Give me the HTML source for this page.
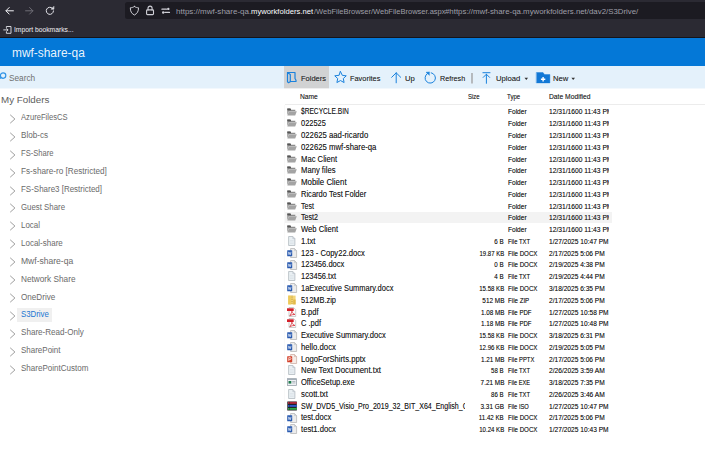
<!DOCTYPE html>
<html lang="en"><head><meta charset="utf-8"><title>mwf-share-qa</title>
<style>
html,body{margin:0;padding:0;background:#fff}
body{width:705px;height:462px;position:relative;overflow:hidden;font-family:"Liberation Sans",sans-serif}
.t{position:absolute;white-space:pre;height:12px;line-height:12px;margin:0;transform-origin:0 0}
.h{text-shadow:0 0.3px 0.5px rgba(0,0,0,.45)}
.g{text-shadow:0 0.3px 0.5px rgba(0,0,0,.5)}
.i{position:absolute;overflow:visible}
.b{position:absolute}
</style></head><body>

<div class="b" style="left:0;top:0;width:705px;height:38px;background:#2b2a33"></div>
<div class="b" style="left:0;top:37px;width:705px;height:1px;background:#15141a"></div>
<div class="b" style="left:125.4px;top:2px;width:600px;height:17px;background:#1c1b22;border-radius:2.5px"></div>
<div class="b" style="left:0;top:38px;width:705px;height:28px;background:#0478d7"></div>
<div class="b" style="left:0;top:66px;width:705px;height:22px;background:#e4f1fb"></div>
<div class="b" style="left:0;top:88px;width:705px;height:1px;background:#f2f8fd"></div>
<div class="b" style="left:284px;top:66px;width:45px;height:22px;background:#d1d2d3"></div>
<div class="b" style="left:284px;top:88px;width:45px;height:1px;background:#eeeeef"></div>
<div class="b" style="left:284px;top:105px;width:1px;height:330px;background:#f9f9f9"></div>
<div class="b" style="left:284.5px;top:103.5px;width:420.5px;height:1px;background:#ececec"></div>
<div class="b" style="left:16.9px;top:307.5px;width:35px;height:14.5px;background:#f0f0f0"></div>
<div class="b" style="left:284.8px;top:211.6px;width:326.8px;height:11.8px;background:#f3f3f3"></div>
<svg class="i" style="left:0;top:0" width="180" height="38" viewBox="0 0 180 38" fill="none" stroke-linecap="round" stroke-linejoin="round">
<g stroke="#f4f4f8" stroke-width="1"><path d="M13.400 10.800H6.200M9.200 7.500L5.900 10.800l3.300 3.300"/></g>
<g stroke="#6f6e77" stroke-width="1"><path d="M25.600 10.800h7.200M29.600 7.500l3.300 3.300-3.300 3.300"/></g>
<g stroke="#e4e4ea" stroke-width="1"><path d="M53.500 10.900a3.600 3.600 0 1 1-1.100-2.700"/><path d="M53.900 6.700v2.500h-2.500z" fill="#e4e4ea" stroke-width="0.600"/></g>
<g stroke="#cfcfd6" stroke-width="1"><path d="M134.400 6.500c1.300 0.900 2.700 1.200 4.100 1.300 0 3.500-1.200 5.800-4.100 7.200-2.900-1.400-4.100-3.700-4.100-7.200 1.400-0.100 2.800-0.400 4.100-1.300z"/></g>
<g stroke="#cfcfd6" stroke-width="1.100"><rect x="146.600" y="9.900" width="6.900" height="4.700" rx="0.800"/><path d="M148 9.900V8.200a2.050 2.050 0 0 1 4.100 0V9.900"/></g>
<g stroke="#cfcfd6" stroke-width="1.200"><path d="M161.900 9.200h4.600M164.800 12.400h4.700"/><circle cx="168.300" cy="8.900" r="1.200" fill="#cfcfd6" stroke="none"/><circle cx="163.200" cy="12.500" r="1.200" fill="#cfcfd6" stroke="none"/></g>
<g stroke="#e4e4ea" stroke-width="0.900"><path d="M6.400 27.500v-1h4.600v6.800H6.400v-1"/><path d="M3.700 29.900h4.200M6.600 28.500l1.400 1.400-1.400 1.400"/></g>
</svg>
<svg class="i" style="left:0;top:70px" width="10" height="14" viewBox="0 0 10 14" fill="none" stroke="#2f93e6" stroke-width="1.200"><circle cx="3.100" cy="5.600" r="2.700"/><path d="M1 7.500L-1 8.700" stroke-width="1.700"/></svg>
<svg class="i" style="left:9px;top:113.90px" width="7" height="10" viewBox="0 0 7 10" fill="none" stroke="#858585" stroke-width="0.8"><path d="M1.200 0.800L5.900 5 1.200 9.200"/></svg>
<svg class="i" style="left:9px;top:131.81px" width="7" height="10" viewBox="0 0 7 10" fill="none" stroke="#858585" stroke-width="0.8"><path d="M1.200 0.800L5.900 5 1.200 9.200"/></svg>
<svg class="i" style="left:9px;top:149.72px" width="7" height="10" viewBox="0 0 7 10" fill="none" stroke="#858585" stroke-width="0.8"><path d="M1.200 0.800L5.900 5 1.200 9.200"/></svg>
<svg class="i" style="left:9px;top:167.63px" width="7" height="10" viewBox="0 0 7 10" fill="none" stroke="#858585" stroke-width="0.8"><path d="M1.200 0.800L5.900 5 1.200 9.200"/></svg>
<svg class="i" style="left:9px;top:185.54px" width="7" height="10" viewBox="0 0 7 10" fill="none" stroke="#858585" stroke-width="0.8"><path d="M1.200 0.800L5.900 5 1.200 9.200"/></svg>
<svg class="i" style="left:9px;top:203.45px" width="7" height="10" viewBox="0 0 7 10" fill="none" stroke="#858585" stroke-width="0.8"><path d="M1.200 0.800L5.900 5 1.200 9.200"/></svg>
<svg class="i" style="left:9px;top:221.36px" width="7" height="10" viewBox="0 0 7 10" fill="none" stroke="#858585" stroke-width="0.8"><path d="M1.200 0.800L5.900 5 1.200 9.200"/></svg>
<svg class="i" style="left:9px;top:239.27px" width="7" height="10" viewBox="0 0 7 10" fill="none" stroke="#858585" stroke-width="0.8"><path d="M1.200 0.800L5.900 5 1.200 9.200"/></svg>
<svg class="i" style="left:9px;top:257.18px" width="7" height="10" viewBox="0 0 7 10" fill="none" stroke="#858585" stroke-width="0.8"><path d="M1.200 0.800L5.900 5 1.200 9.200"/></svg>
<svg class="i" style="left:9px;top:275.09px" width="7" height="10" viewBox="0 0 7 10" fill="none" stroke="#858585" stroke-width="0.8"><path d="M1.200 0.800L5.900 5 1.200 9.200"/></svg>
<svg class="i" style="left:9px;top:293.00px" width="7" height="10" viewBox="0 0 7 10" fill="none" stroke="#858585" stroke-width="0.8"><path d="M1.200 0.800L5.900 5 1.200 9.200"/></svg>
<svg class="i" style="left:9px;top:310.91px" width="7" height="10" viewBox="0 0 7 10" fill="none" stroke="#858585" stroke-width="0.8"><path d="M1.200 0.800L5.900 5 1.200 9.200"/></svg>
<svg class="i" style="left:9px;top:328.82px" width="7" height="10" viewBox="0 0 7 10" fill="none" stroke="#858585" stroke-width="0.8"><path d="M1.200 0.800L5.900 5 1.200 9.200"/></svg>
<svg class="i" style="left:9px;top:346.73px" width="7" height="10" viewBox="0 0 7 10" fill="none" stroke="#858585" stroke-width="0.8"><path d="M1.200 0.800L5.900 5 1.200 9.200"/></svg>
<svg class="i" style="left:9px;top:364.64px" width="7" height="10" viewBox="0 0 7 10" fill="none" stroke="#858585" stroke-width="0.8"><path d="M1.200 0.800L5.900 5 1.200 9.200"/></svg>
<svg class="i" style="left:280px;top:66px" width="310" height="22" viewBox="0 0 310 22" fill="none" stroke="#1a82dd" stroke-width="1" stroke-linejoin="round" stroke-linecap="round">
<path d="M7.500 6.500H15V12.500L16 14.200V15.500H10.400" stroke-width="1.200"/><path d="M7.500 6.500L10.300 8.400V15.800L8.600 16.700L7.500 15.700Z" stroke-width="1.200"/>
<path d="M60.500 5.600l1.750 3.700 4 0.500-2.950 2.750 0.800 4-3.600-2-3.600 2 0.800-4-2.950-2.750 4-0.500z"/>
<path d="M116.200 16.800V6.800M111.700 11.300l4.500-4.500 4.500 4.500"/>
<path d="M151.300 6.800A5.200 5.200 0 1 1 147.600 7.400"/>
<path d="M149.300 6L146 6.300 149.200 9.100Z" fill="#1a82dd" stroke-width="0.5"/>
<path d="M192 7.100v10.300" stroke="#9c9c9c" stroke-width="1.300" stroke-linecap="butt"/>
<path d="M202.900 6.700H210M206.400 17.300V8.200M203.200 11.400l3.200-3.200 3.200 3.200"/>
<path d="M256.600 6.500H263L264.500 8.500H269.900V16.900H256.600Z" fill="#1278d6" stroke="#1278d6" stroke-width="0.400"/>
<path d="M263.100 11.100v4.400M260.900 13.300h4.400" stroke="#fff" stroke-width="1.400" stroke-linecap="butt"/>
<path d="M244.500 11.800h3.600l-1.800 2.100z" fill="#333" stroke="none"/>
<path d="M291.400 11.800h3.600l-1.800 2.100z" fill="#333" stroke="none"/>
</svg>
<svg class="i" style="left:286.9px;top:107.50px" width="10" height="8" viewBox="0 0 10 8"><path d="M0.300 0.400h3.100l0.700 1.300h4.200v1.400h-6.400l-1.600 4z" fill="#8c8c8c"/><path d="M0.300 0.400h3.100l0.600 1.200v0.700h-3.700z" fill="#555"/><path d="M1.900 3.300h7.900l-1.600 4.100h-7.900z" fill="#a4a4a4"/></svg>
<svg class="i" style="left:286.9px;top:119.27px" width="10" height="8" viewBox="0 0 10 8"><path d="M0.300 0.400h3.100l0.700 1.300h4.200v1.400h-6.400l-1.600 4z" fill="#8c8c8c"/><path d="M0.300 0.400h3.100l0.600 1.200v0.700h-3.700z" fill="#555"/><path d="M1.900 3.300h7.900l-1.600 4.100h-7.900z" fill="#a4a4a4"/></svg>
<svg class="i" style="left:286.9px;top:131.03px" width="10" height="8" viewBox="0 0 10 8"><path d="M0.300 0.400h3.100l0.700 1.300h4.200v1.400h-6.400l-1.600 4z" fill="#8c8c8c"/><path d="M0.300 0.400h3.100l0.600 1.200v0.700h-3.700z" fill="#555"/><path d="M1.900 3.300h7.900l-1.600 4.100h-7.900z" fill="#a4a4a4"/></svg>
<svg class="i" style="left:286.9px;top:142.80px" width="10" height="8" viewBox="0 0 10 8"><path d="M0.300 0.400h3.100l0.700 1.300h4.200v1.400h-6.400l-1.600 4z" fill="#8c8c8c"/><path d="M0.300 0.400h3.100l0.600 1.200v0.700h-3.700z" fill="#555"/><path d="M1.900 3.300h7.900l-1.600 4.100h-7.900z" fill="#a4a4a4"/></svg>
<svg class="i" style="left:286.9px;top:154.57px" width="10" height="8" viewBox="0 0 10 8"><path d="M0.300 0.400h3.100l0.700 1.300h4.200v1.400h-6.400l-1.600 4z" fill="#8c8c8c"/><path d="M0.300 0.400h3.100l0.600 1.200v0.700h-3.700z" fill="#555"/><path d="M1.900 3.300h7.900l-1.600 4.100h-7.900z" fill="#a4a4a4"/></svg>
<svg class="i" style="left:286.9px;top:166.33px" width="10" height="8" viewBox="0 0 10 8"><path d="M0.300 0.400h3.100l0.700 1.300h4.200v1.400h-6.400l-1.600 4z" fill="#8c8c8c"/><path d="M0.300 0.400h3.100l0.600 1.200v0.700h-3.700z" fill="#555"/><path d="M1.900 3.300h7.900l-1.600 4.100h-7.900z" fill="#a4a4a4"/></svg>
<svg class="i" style="left:286.9px;top:178.10px" width="10" height="8" viewBox="0 0 10 8"><path d="M0.300 0.400h3.100l0.700 1.300h4.200v1.400h-6.400l-1.600 4z" fill="#8c8c8c"/><path d="M0.300 0.400h3.100l0.600 1.200v0.700h-3.700z" fill="#555"/><path d="M1.900 3.300h7.900l-1.600 4.100h-7.900z" fill="#a4a4a4"/></svg>
<svg class="i" style="left:286.9px;top:189.87px" width="10" height="8" viewBox="0 0 10 8"><path d="M0.300 0.400h3.100l0.700 1.300h4.200v1.400h-6.400l-1.600 4z" fill="#8c8c8c"/><path d="M0.300 0.400h3.100l0.600 1.200v0.700h-3.700z" fill="#555"/><path d="M1.900 3.300h7.900l-1.600 4.100h-7.900z" fill="#a4a4a4"/></svg>
<svg class="i" style="left:286.9px;top:201.64px" width="10" height="8" viewBox="0 0 10 8"><path d="M0.300 0.400h3.100l0.700 1.300h4.200v1.400h-6.400l-1.600 4z" fill="#8c8c8c"/><path d="M0.300 0.400h3.100l0.600 1.200v0.700h-3.700z" fill="#555"/><path d="M1.900 3.300h7.900l-1.600 4.100h-7.900z" fill="#a4a4a4"/></svg>
<svg class="i" style="left:286.9px;top:213.40px" width="10" height="8" viewBox="0 0 10 8"><path d="M0.300 0.400h3.100l0.700 1.300h4.200v1.400h-6.400l-1.600 4z" fill="#8c8c8c"/><path d="M0.300 0.400h3.100l0.600 1.200v0.700h-3.700z" fill="#555"/><path d="M1.900 3.300h7.900l-1.600 4.100h-7.900z" fill="#a4a4a4"/></svg>
<svg class="i" style="left:286.9px;top:225.17px" width="10" height="8" viewBox="0 0 10 8"><path d="M0.300 0.400h3.100l0.700 1.300h4.200v1.400h-6.400l-1.600 4z" fill="#8c8c8c"/><path d="M0.300 0.400h3.100l0.600 1.200v0.700h-3.700z" fill="#555"/><path d="M1.900 3.300h7.900l-1.600 4.100h-7.900z" fill="#a4a4a4"/></svg>
<svg class="i" style="left:287.0px;top:236.04px" width="10" height="10" viewBox="0 0 10 10"><path d="M1.6 0.5h4.2l2.1 2.1v6.9h-6.3z" fill="#e9eff3" stroke="#a9b1b9" stroke-width="0.7"/><path d="M5.8 0.5v2.1h2.1" fill="none" stroke="#b4bbc2" stroke-width="0.6"/><path d="M3 4.500h3.600M3 6h3.600M3 7.500h3.600" stroke="#d3dbe1" stroke-width="0.5"/></svg>
<svg class="i" style="left:287.0px;top:247.80px" width="10" height="10" viewBox="0 0 10 10"><path d="M3.6 0.5h3.9l2.1 2.1v6.9h-6z" fill="#ececec" stroke="#b0b0b0" stroke-width="0.7"/><path d="M7.5 0.5v2.1h2.1" fill="none" stroke="#b8bdc2" stroke-width="0.6"/><rect x="0.2" y="2.2" width="5" height="6" rx="0.5" fill="#2a5bb0"/><path d="M1.3 3.8l0.7 2.9 0.7-2.3 0.7 2.3 0.7-2.9" fill="none" stroke="#dfe8f7" stroke-width="0.7"/></svg>
<svg class="i" style="left:287.0px;top:259.57px" width="10" height="10" viewBox="0 0 10 10"><path d="M3.6 0.5h3.9l2.1 2.1v6.9h-6z" fill="#ececec" stroke="#b0b0b0" stroke-width="0.7"/><path d="M7.5 0.5v2.1h2.1" fill="none" stroke="#b8bdc2" stroke-width="0.6"/><rect x="0.2" y="2.2" width="5" height="6" rx="0.5" fill="#2a5bb0"/><path d="M1.3 3.8l0.7 2.9 0.7-2.3 0.7 2.3 0.7-2.9" fill="none" stroke="#dfe8f7" stroke-width="0.7"/></svg>
<svg class="i" style="left:287.0px;top:271.34px" width="10" height="10" viewBox="0 0 10 10"><path d="M1.6 0.5h4.2l2.1 2.1v6.9h-6.3z" fill="#e9eff3" stroke="#a9b1b9" stroke-width="0.7"/><path d="M5.8 0.5v2.1h2.1" fill="none" stroke="#b4bbc2" stroke-width="0.6"/><path d="M3 4.500h3.600M3 6h3.600M3 7.500h3.600" stroke="#d3dbe1" stroke-width="0.5"/></svg>
<svg class="i" style="left:287.0px;top:283.11px" width="10" height="10" viewBox="0 0 10 10"><path d="M3.6 0.5h3.9l2.1 2.1v6.9h-6z" fill="#ececec" stroke="#b0b0b0" stroke-width="0.7"/><path d="M7.5 0.5v2.1h2.1" fill="none" stroke="#b8bdc2" stroke-width="0.6"/><rect x="0.2" y="2.2" width="5" height="6" rx="0.5" fill="#2a5bb0"/><path d="M1.3 3.8l0.7 2.9 0.7-2.3 0.7 2.3 0.7-2.9" fill="none" stroke="#dfe8f7" stroke-width="0.7"/></svg>
<svg class="i" style="left:287.0px;top:294.87px" width="10" height="10" viewBox="0 0 10 10"><path d="M1.2 0.6h4.8l2.6 0v8.8h-7.4z" fill="#f3d577"/><path d="M1.2 0.6h2.6v8.8h-2.6z" fill="#eec95a"/><path d="M5 0.6v8.8" stroke="#b08a2c" stroke-width="0.9" stroke-dasharray="0.9 0.9"/><path d="M6.2 4.5h2.4v4.9h-2.4z" fill="#e2b94a"/></svg>
<svg class="i" style="left:287.0px;top:306.64px" width="10" height="10" viewBox="0 0 10 10"><path d="M2 0.5h4.6l2.1 2.1v6.9h-6.7z" fill="#fbfbfb" stroke="#b9b9b9" stroke-width="0.7"/><rect x="0" y="1.300" width="6.700" height="2.700" fill="#d3202a"/><path d="M2.8 8.6c1-1.3 1.9-3 2.1-4.4 0.5 1.9 1.6 3 3 3.2-1.6 0-3.6 0.5-5.1 1.2z" fill="none" stroke="#d3202a" stroke-width="0.75"/></svg>
<svg class="i" style="left:287.0px;top:318.41px" width="10" height="10" viewBox="0 0 10 10"><path d="M2 0.5h4.6l2.1 2.1v6.9h-6.7z" fill="#fbfbfb" stroke="#b9b9b9" stroke-width="0.7"/><rect x="0" y="1.300" width="6.700" height="2.700" fill="#d3202a"/><path d="M2.8 8.6c1-1.3 1.9-3 2.1-4.4 0.5 1.9 1.6 3 3 3.2-1.6 0-3.6 0.5-5.1 1.2z" fill="none" stroke="#d3202a" stroke-width="0.75"/></svg>
<svg class="i" style="left:287.0px;top:330.17px" width="10" height="10" viewBox="0 0 10 10"><path d="M3.6 0.5h3.9l2.1 2.1v6.9h-6z" fill="#ececec" stroke="#b0b0b0" stroke-width="0.7"/><path d="M7.5 0.5v2.1h2.1" fill="none" stroke="#b8bdc2" stroke-width="0.6"/><rect x="0.2" y="2.2" width="5" height="6" rx="0.5" fill="#2a5bb0"/><path d="M1.3 3.8l0.7 2.9 0.7-2.3 0.7 2.3 0.7-2.9" fill="none" stroke="#dfe8f7" stroke-width="0.7"/></svg>
<svg class="i" style="left:287.0px;top:341.94px" width="10" height="10" viewBox="0 0 10 10"><path d="M3.6 0.5h3.9l2.1 2.1v6.9h-6z" fill="#ececec" stroke="#b0b0b0" stroke-width="0.7"/><path d="M7.5 0.5v2.1h2.1" fill="none" stroke="#b8bdc2" stroke-width="0.6"/><rect x="0.2" y="2.2" width="5" height="6" rx="0.5" fill="#2a5bb0"/><path d="M1.3 3.8l0.7 2.9 0.7-2.3 0.7 2.3 0.7-2.9" fill="none" stroke="#dfe8f7" stroke-width="0.7"/></svg>
<svg class="i" style="left:287.0px;top:353.71px" width="10" height="10" viewBox="0 0 10 10"><path d="M3.6 0.5h3.9l2.1 2.1v6.9h-6z" fill="#f6ece8" stroke="#c9a79c" stroke-width="0.7"/><path d="M7.5 0.5v2.1h2.1" fill="none" stroke="#c9a79c" stroke-width="0.6"/><rect x="0.2" y="2.2" width="5" height="6" rx="0.5" fill="#d2402a"/><path d="M1.8 7v-3.4h1.2a1 1 0 0 1 0 2h-1.2" fill="none" stroke="#fbe6e1" stroke-width="0.8"/></svg>
<svg class="i" style="left:287.0px;top:365.47px" width="10" height="10" viewBox="0 0 10 10"><path d="M1.6 0.5h4.2l2.1 2.1v6.9h-6.3z" fill="#e9eff3" stroke="#a9b1b9" stroke-width="0.7"/><path d="M5.8 0.5v2.1h2.1" fill="none" stroke="#b4bbc2" stroke-width="0.6"/><path d="M3 4.500h3.600M3 6h3.600M3 7.500h3.600" stroke="#d3dbe1" stroke-width="0.5"/></svg>
<svg class="i" style="left:287.0px;top:377.24px" width="10" height="10" viewBox="0 0 10 10"><rect x="0.5" y="1.7" width="9" height="6.8" fill="#eef1f4" stroke="#8a949e" stroke-width="0.7"/><rect x="0.5" y="1.7" width="9" height="1.3" fill="#a5afb9"/><rect x="1.5" y="4" width="2.8" height="2.6" fill="#1f7a4c"/><rect x="5.2" y="4.2" width="3.2" height="0.7" fill="#9aa3ad"/><rect x="5.2" y="5.6" width="3.2" height="0.7" fill="#9aa3ad"/></svg>
<svg class="i" style="left:287.0px;top:389.01px" width="10" height="10" viewBox="0 0 10 10"><path d="M1.6 0.5h4.2l2.1 2.1v6.9h-6.3z" fill="#e9eff3" stroke="#a9b1b9" stroke-width="0.7"/><path d="M5.8 0.5v2.1h2.1" fill="none" stroke="#b4bbc2" stroke-width="0.6"/><path d="M3 4.500h3.600M3 6h3.600M3 7.500h3.600" stroke="#d3dbe1" stroke-width="0.5"/></svg>
<svg class="i" style="left:287.0px;top:400.78px" width="10" height="10" viewBox="0 0 10 10"><rect x="0.3" y="0.5" width="9.5" height="9" fill="#1c1c22"/><rect x="1" y="0.9" width="8.8" height="2" fill="#b0283a"/><rect x="1" y="3.9" width="8.8" height="2" fill="#2d58c8"/><rect x="1" y="6.9" width="8.8" height="1.9" fill="#2faa4a"/><rect x="2.2" y="0.9" width="0.8" height="8" fill="#1c1c22" opacity="0.55"/></svg>
<svg class="i" style="left:287.0px;top:412.54px" width="10" height="10" viewBox="0 0 10 10"><path d="M3.6 0.5h3.9l2.1 2.1v6.9h-6z" fill="#ececec" stroke="#b0b0b0" stroke-width="0.7"/><path d="M7.5 0.5v2.1h2.1" fill="none" stroke="#b8bdc2" stroke-width="0.6"/><rect x="0.2" y="2.2" width="5" height="6" rx="0.5" fill="#2a5bb0"/><path d="M1.3 3.8l0.7 2.9 0.7-2.3 0.7 2.3 0.7-2.9" fill="none" stroke="#dfe8f7" stroke-width="0.7"/></svg>
<svg class="i" style="left:287.0px;top:424.31px" width="10" height="10" viewBox="0 0 10 10"><path d="M3.6 0.5h3.9l2.1 2.1v6.9h-6z" fill="#ececec" stroke="#b0b0b0" stroke-width="0.7"/><path d="M7.5 0.5v2.1h2.1" fill="none" stroke="#b8bdc2" stroke-width="0.6"/><rect x="0.2" y="2.2" width="5" height="6" rx="0.5" fill="#2a5bb0"/><path d="M1.3 3.8l0.7 2.9 0.7-2.3 0.7 2.3 0.7-2.9" fill="none" stroke="#dfe8f7" stroke-width="0.7"/></svg>
<div class="t" style="top:6.00px;font-size:7.7px;color:#9f9fa8;left:175.80px;transform:scaleX(1.0415)">https://mwf-share-qa.</div>
<div class="t" style="top:6.00px;font-size:7.7px;color:#fbfbfe;left:251.20px;transform:scaleX(0.9956)">myworkfolders.net</div>
<div class="t" style="top:6.00px;font-size:7.7px;color:#9f9fa8;left:313.50px;transform:scaleX(0.9761)">/WebFileBrowser/WebFileBrowser.aspx</div>
<div class="t" style="top:6.00px;font-size:7.7px;color:#9f9fa8;left:445.00px;transform:scaleX(1.0212)">#https://mwf-share-qa.myworkfolders.net/dav2/S3Drive/</div>
<div class="t" style="top:24.00px;font-size:7.1px;color:#f0f0f4;left:14.20px;transform:scaleX(0.9507)">Import bookmarks...</div>
<div class="t" style="top:47.00px;font-size:12.0px;color:rgba(255,255,255,.93);left:12.00px;transform:scaleX(0.9924)">mwf-share-qa</div>
<div class="t" style="top:72.00px;font-size:9.0px;color:#707070;left:9.00px;transform:scaleX(0.9183)">Search</div>
<div class="t" style="top:94.00px;font-size:9.6px;color:#606060;left:0.80px;transform:scaleX(1.0200)">My Folders</div>
<div class="t" style="top:111.00px;font-size:8.4px;color:#6a6a6a;left:20.80px;transform:scaleX(0.9101)">AzureFilesCS</div>
<div class="t" style="top:129.00px;font-size:8.4px;color:#6a6a6a;left:20.80px;transform:scaleX(0.9700)">Blob-cs</div>
<div class="t" style="top:147.00px;font-size:8.4px;color:#6a6a6a;left:20.80px;transform:scaleX(0.9067)">FS-Share</div>
<div class="t" style="top:165.00px;font-size:8.4px;color:#6a6a6a;left:20.80px;transform:scaleX(0.9765)">Fs-share-ro [Restricted]</div>
<div class="t" style="top:183.00px;font-size:8.4px;color:#6a6a6a;left:20.80px;transform:scaleX(0.9508)">FS-Share3 [Restricted]</div>
<div class="t" style="top:201.00px;font-size:8.4px;color:#6a6a6a;left:20.80px;transform:scaleX(0.9355)">Guest Share</div>
<div class="t" style="top:219.00px;font-size:8.4px;color:#6a6a6a;left:20.80px;transform:scaleX(0.9435)">Local</div>
<div class="t" style="top:237.00px;font-size:8.4px;color:#6a6a6a;left:20.80px;transform:scaleX(0.9551)">Local-share</div>
<div class="t" style="top:255.00px;font-size:8.4px;color:#6a6a6a;left:20.80px;transform:scaleX(1.0195)">Mwf-share-qa</div>
<div class="t" style="top:273.00px;font-size:8.4px;color:#6a6a6a;left:20.80px;transform:scaleX(0.9839)">Network Share</div>
<div class="t" style="top:291.00px;font-size:8.4px;color:#6a6a6a;left:20.80px;transform:scaleX(0.9696)">OneDrive</div>
<div class="t" style="top:308.00px;font-size:8.4px;color:#1b76d2;left:20.80px;transform:scaleX(0.9363)">S3Drive</div>
<div class="t" style="top:326.00px;font-size:8.4px;color:#6a6a6a;left:20.80px;transform:scaleX(0.9651)">Share-Read-Only</div>
<div class="t" style="top:344.00px;font-size:8.4px;color:#6a6a6a;left:20.80px;transform:scaleX(0.9532)">SharePoint</div>
<div class="t" style="top:362.00px;font-size:8.4px;color:#6a6a6a;left:20.80px;transform:scaleX(0.9588)">SharePointCustom</div>
<div class="t h" style="top:73.00px;font-size:7.8px;color:#333;left:300.50px;transform:scaleX(0.9615)">Folders</div>
<div class="t h" style="top:73.00px;font-size:7.8px;color:#333;left:350.20px;transform:scaleX(0.9477)">Favorites</div>
<div class="t h" style="top:73.00px;font-size:7.8px;color:#333;left:405.20px;transform:scaleX(0.9831)">Up</div>
<div class="t h" style="top:73.00px;font-size:7.8px;color:#333;left:439.60px;transform:scaleX(0.9227)">Refresh</div>
<div class="t h" style="top:73.00px;font-size:7.8px;color:#333;left:496.00px;transform:scaleX(0.9831)">Upload</div>
<div class="t h" style="top:73.00px;font-size:7.8px;color:#333;left:552.70px;transform:scaleX(0.9802)">New</div>
<div class="t g" style="top:91.00px;font-size:7.1px;color:#333;left:300.00px;transform:scaleX(0.9399)">Name</div>
<div class="t g" style="top:91.00px;font-size:7.1px;color:#333;left:467.90px;transform:scaleX(0.8471)">Size</div>
<div class="t g" style="top:91.00px;font-size:7.1px;color:#333;left:507.30px;transform:scaleX(0.8577)">Type</div>
<div class="t g" style="top:91.00px;font-size:7.1px;color:#333;left:548.80px;transform:scaleX(0.9479)">Date Modified</div>
<div class="t h" style="top:105.00px;font-size:8.4px;color:#1f1f1f;left:300.80px;transform:scaleX(0.7899)">$RECYCLE.BIN</div>
<div class="t g" style="top:106.00px;font-size:7.1px;color:#1f1f1f;left:507.80px;transform:scaleX(0.9249)">Folder</div>
<div class="t g" style="top:106.00px;font-size:7.1px;color:#1f1f1f;left:549.20px;width:60.20px;overflow:hidden"><span style="display:inline-block;transform-origin:0 0;transform:scaleX(0.9419)">12/31/1600 11:43 PM</span></div>
<div class="t h" style="top:117.00px;font-size:8.4px;color:#1f1f1f;left:300.80px;transform:scaleX(0.8872)">022525</div>
<div class="t g" style="top:118.00px;font-size:7.1px;color:#1f1f1f;left:507.80px;transform:scaleX(0.9249)">Folder</div>
<div class="t g" style="top:118.00px;font-size:7.1px;color:#1f1f1f;left:549.20px;width:60.20px;overflow:hidden"><span style="display:inline-block;transform-origin:0 0;transform:scaleX(0.9419)">12/31/1600 11:43 PM</span></div>
<div class="t h" style="top:129.00px;font-size:8.4px;color:#1f1f1f;left:300.80px;transform:scaleX(0.9251)">022625 aad-ricardo</div>
<div class="t g" style="top:130.00px;font-size:7.1px;color:#1f1f1f;left:507.80px;transform:scaleX(0.9249)">Folder</div>
<div class="t g" style="top:130.00px;font-size:7.1px;color:#1f1f1f;left:549.20px;width:60.20px;overflow:hidden"><span style="display:inline-block;transform-origin:0 0;transform:scaleX(0.9419)">12/31/1600 11:43 PM</span></div>
<div class="t h" style="top:141.00px;font-size:8.4px;color:#1f1f1f;left:300.80px;transform:scaleX(0.9255)">022625 mwf-share-qa</div>
<div class="t g" style="top:142.00px;font-size:7.1px;color:#1f1f1f;left:507.80px;transform:scaleX(0.9249)">Folder</div>
<div class="t g" style="top:142.00px;font-size:7.1px;color:#1f1f1f;left:549.20px;width:60.20px;overflow:hidden"><span style="display:inline-block;transform-origin:0 0;transform:scaleX(0.9419)">12/31/1600 11:43 PM</span></div>
<div class="t h" style="top:153.00px;font-size:8.4px;color:#1f1f1f;left:300.80px;transform:scaleX(0.9150)">Mac Client</div>
<div class="t g" style="top:154.00px;font-size:7.1px;color:#1f1f1f;left:507.80px;transform:scaleX(0.9249)">Folder</div>
<div class="t g" style="top:154.00px;font-size:7.1px;color:#1f1f1f;left:549.20px;width:60.20px;overflow:hidden"><span style="display:inline-block;transform-origin:0 0;transform:scaleX(0.9419)">12/31/1600 11:43 PM</span></div>
<div class="t h" style="top:164.00px;font-size:8.4px;color:#1f1f1f;left:300.80px;transform:scaleX(0.9150)">Many files</div>
<div class="t g" style="top:165.00px;font-size:7.1px;color:#1f1f1f;left:507.80px;transform:scaleX(0.9249)">Folder</div>
<div class="t g" style="top:165.00px;font-size:7.1px;color:#1f1f1f;left:549.20px;width:60.20px;overflow:hidden"><span style="display:inline-block;transform-origin:0 0;transform:scaleX(0.9419)">12/31/1600 11:43 PM</span></div>
<div class="t h" style="top:176.00px;font-size:8.4px;color:#1f1f1f;left:300.80px;transform:scaleX(0.9417)">Mobile Client</div>
<div class="t g" style="top:177.00px;font-size:7.1px;color:#1f1f1f;left:507.80px;transform:scaleX(0.9249)">Folder</div>
<div class="t g" style="top:177.00px;font-size:7.1px;color:#1f1f1f;left:549.20px;width:60.20px;overflow:hidden"><span style="display:inline-block;transform-origin:0 0;transform:scaleX(0.9419)">12/31/1600 11:43 PM</span></div>
<div class="t h" style="top:188.00px;font-size:8.4px;color:#1f1f1f;left:300.80px;transform:scaleX(0.8997)">Ricardo Test Folder</div>
<div class="t g" style="top:189.00px;font-size:7.1px;color:#1f1f1f;left:507.80px;transform:scaleX(0.9249)">Folder</div>
<div class="t g" style="top:189.00px;font-size:7.1px;color:#1f1f1f;left:549.20px;width:60.20px;overflow:hidden"><span style="display:inline-block;transform-origin:0 0;transform:scaleX(0.9419)">12/31/1600 11:43 PM</span></div>
<div class="t h" style="top:200.00px;font-size:8.4px;color:#1f1f1f;left:300.80px;transform:scaleX(0.8399)">Test</div>
<div class="t g" style="top:201.00px;font-size:7.1px;color:#1f1f1f;left:507.80px;transform:scaleX(0.9249)">Folder</div>
<div class="t g" style="top:201.00px;font-size:7.1px;color:#1f1f1f;left:549.20px;width:60.20px;overflow:hidden"><span style="display:inline-block;transform-origin:0 0;transform:scaleX(0.9419)">12/31/1600 11:43 PM</span></div>
<div class="t h" style="top:211.00px;font-size:8.4px;color:#1f1f1f;left:300.80px;transform:scaleX(0.8487)">Test2</div>
<div class="t g" style="top:212.00px;font-size:7.1px;color:#1f1f1f;left:507.80px;transform:scaleX(0.9249)">Folder</div>
<div class="t g" style="top:212.00px;font-size:7.1px;color:#1f1f1f;left:549.20px;width:60.20px;overflow:hidden"><span style="display:inline-block;transform-origin:0 0;transform:scaleX(0.9419)">12/31/1600 11:43 PM</span></div>
<div class="t h" style="top:223.00px;font-size:8.4px;color:#1f1f1f;left:300.80px;transform:scaleX(0.9090)">Web Client</div>
<div class="t g" style="top:224.00px;font-size:7.1px;color:#1f1f1f;left:507.80px;transform:scaleX(0.9249)">Folder</div>
<div class="t g" style="top:224.00px;font-size:7.1px;color:#1f1f1f;left:549.20px;width:60.20px;overflow:hidden"><span style="display:inline-block;transform-origin:0 0;transform:scaleX(0.9419)">12/31/1600 11:43 PM</span></div>
<div class="t h" style="top:235.00px;font-size:8.4px;color:#1f1f1f;left:300.80px;transform:scaleX(0.9098)">1.txt</div>
<div class="t g" style="top:236.00px;font-size:7.1px;color:#1f1f1f;right:201.00px;transform-origin:100% 0;transform:scaleX(0.8727)">6 B</div>
<div class="t g" style="top:236.00px;font-size:7.1px;color:#1f1f1f;left:507.80px;transform:scaleX(0.8248)">File TXT</div>
<div class="t g" style="top:236.00px;font-size:7.1px;color:#1f1f1f;left:549.20px;transform:scaleX(0.9326)">1/27/2025 10:47 PM</div>
<div class="t h" style="top:247.00px;font-size:8.4px;color:#1f1f1f;left:300.80px;transform:scaleX(0.9074)">123 - Copy22.docx</div>
<div class="t g" style="top:248.00px;font-size:7.1px;color:#1f1f1f;right:201.00px;transform-origin:100% 0;transform:scaleX(0.8463)">19.87 KB</div>
<div class="t g" style="top:248.00px;font-size:7.1px;color:#1f1f1f;left:507.80px;transform:scaleX(0.8700)">File DOCX</div>
<div class="t g" style="top:248.00px;font-size:7.1px;color:#1f1f1f;left:549.20px;transform:scaleX(0.9291)">2/17/2025 5:06 PM</div>
<div class="t h" style="top:258.00px;font-size:8.4px;color:#1f1f1f;left:300.80px;transform:scaleX(0.9048)">123456.docx</div>
<div class="t g" style="top:259.00px;font-size:7.1px;color:#1f1f1f;right:201.00px;transform-origin:100% 0;transform:scaleX(0.8727)">0 B</div>
<div class="t g" style="top:259.00px;font-size:7.1px;color:#1f1f1f;left:507.80px;transform:scaleX(0.8700)">File DOCX</div>
<div class="t g" style="top:259.00px;font-size:7.1px;color:#1f1f1f;left:549.20px;transform:scaleX(0.9291)">2/19/2025 4:38 PM</div>
<div class="t h" style="top:270.00px;font-size:8.4px;color:#1f1f1f;left:300.80px;transform:scaleX(0.8946)">123456.txt</div>
<div class="t g" style="top:271.00px;font-size:7.1px;color:#1f1f1f;right:201.00px;transform-origin:100% 0;transform:scaleX(0.8727)">4 B</div>
<div class="t g" style="top:271.00px;font-size:7.1px;color:#1f1f1f;left:507.80px;transform:scaleX(0.8248)">File TXT</div>
<div class="t g" style="top:271.00px;font-size:7.1px;color:#1f1f1f;left:549.20px;transform:scaleX(0.9291)">2/19/2025 4:44 PM</div>
<div class="t h" style="top:282.00px;font-size:8.4px;color:#1f1f1f;left:300.80px;transform:scaleX(0.8955)">1aExecutive Summary.docx</div>
<div class="t g" style="top:283.00px;font-size:7.1px;color:#1f1f1f;right:201.00px;transform-origin:100% 0;transform:scaleX(0.8565)">15.58 KB</div>
<div class="t g" style="top:283.00px;font-size:7.1px;color:#1f1f1f;left:507.80px;transform:scaleX(0.8700)">File DOCX</div>
<div class="t g" style="top:283.00px;font-size:7.1px;color:#1f1f1f;left:549.20px;transform:scaleX(0.9291)">3/18/2025 6:35 PM</div>
<div class="t h" style="top:294.00px;font-size:8.4px;color:#1f1f1f;left:300.80px;transform:scaleX(0.8843)">512MB.zip</div>
<div class="t g" style="top:295.00px;font-size:7.1px;color:#1f1f1f;right:201.00px;transform-origin:100% 0;transform:scaleX(0.9038)">512 MB</div>
<div class="t g" style="top:295.00px;font-size:7.1px;color:#1f1f1f;left:507.80px;transform:scaleX(0.8675)">File ZIP</div>
<div class="t g" style="top:295.00px;font-size:7.1px;color:#1f1f1f;left:549.20px;transform:scaleX(0.9291)">2/17/2025 5:06 PM</div>
<div class="t h" style="top:306.00px;font-size:8.4px;color:#1f1f1f;left:300.80px;transform:scaleX(0.8946)">B.pdf</div>
<div class="t g" style="top:307.00px;font-size:7.1px;color:#1f1f1f;right:201.00px;transform-origin:100% 0;transform:scaleX(0.8894)">1.08 MB</div>
<div class="t g" style="top:307.00px;font-size:7.1px;color:#1f1f1f;left:507.80px;transform:scaleX(0.8516)">File PDF</div>
<div class="t g" style="top:307.00px;font-size:7.1px;color:#1f1f1f;left:549.20px;transform:scaleX(0.9326)">1/27/2025 10:58 PM</div>
<div class="t h" style="top:317.00px;font-size:8.4px;color:#1f1f1f;left:300.80px;transform:scaleX(0.8990)">C .pdf</div>
<div class="t g" style="top:318.00px;font-size:7.1px;color:#1f1f1f;right:201.00px;transform-origin:100% 0;transform:scaleX(0.8894)">1.18 MB</div>
<div class="t g" style="top:318.00px;font-size:7.1px;color:#1f1f1f;left:507.80px;transform:scaleX(0.8516)">File PDF</div>
<div class="t g" style="top:318.00px;font-size:7.1px;color:#1f1f1f;left:549.20px;transform:scaleX(0.9326)">1/27/2025 10:48 PM</div>
<div class="t h" style="top:329.00px;font-size:8.4px;color:#1f1f1f;left:300.80px;transform:scaleX(0.9023)">Executive Summary.docx</div>
<div class="t g" style="top:330.00px;font-size:7.1px;color:#1f1f1f;right:201.00px;transform-origin:100% 0;transform:scaleX(0.8565)">15.58 KB</div>
<div class="t g" style="top:330.00px;font-size:7.1px;color:#1f1f1f;left:507.80px;transform:scaleX(0.8700)">File DOCX</div>
<div class="t g" style="top:330.00px;font-size:7.1px;color:#1f1f1f;left:549.20px;transform:scaleX(0.9291)">3/18/2025 6:31 PM</div>
<div class="t h" style="top:341.00px;font-size:8.4px;color:#1f1f1f;left:300.80px;transform:scaleX(0.9253)">hello.docx</div>
<div class="t g" style="top:342.00px;font-size:7.1px;color:#1f1f1f;right:201.00px;transform-origin:100% 0;transform:scaleX(0.8565)">12.96 KB</div>
<div class="t g" style="top:342.00px;font-size:7.1px;color:#1f1f1f;left:507.80px;transform:scaleX(0.8700)">File DOCX</div>
<div class="t g" style="top:342.00px;font-size:7.1px;color:#1f1f1f;left:549.20px;transform:scaleX(0.9291)">2/19/2025 5:05 PM</div>
<div class="t h" style="top:353.00px;font-size:8.4px;color:#1f1f1f;left:300.80px;transform:scaleX(0.9129)">LogoForShirts.pptx</div>
<div class="t g" style="top:354.00px;font-size:7.1px;color:#1f1f1f;right:201.00px;transform-origin:100% 0;transform:scaleX(0.8894)">1.21 MB</div>
<div class="t g" style="top:354.00px;font-size:7.1px;color:#1f1f1f;left:507.80px;transform:scaleX(0.8235)">File PPTX</div>
<div class="t g" style="top:354.00px;font-size:7.1px;color:#1f1f1f;left:549.20px;transform:scaleX(0.9291)">2/17/2025 5:06 PM</div>
<div class="t h" style="top:364.00px;font-size:8.4px;color:#1f1f1f;left:300.80px;transform:scaleX(0.9307)">New Text Document.txt</div>
<div class="t g" style="top:365.00px;font-size:7.1px;color:#1f1f1f;right:201.00px;transform-origin:100% 0;transform:scaleX(0.8565)">58 B</div>
<div class="t g" style="top:365.00px;font-size:7.1px;color:#1f1f1f;left:507.80px;transform:scaleX(0.8248)">File TXT</div>
<div class="t g" style="top:365.00px;font-size:7.1px;color:#1f1f1f;left:549.20px;transform:scaleX(0.9352)">2/26/2025 3:59 AM</div>
<div class="t h" style="top:376.00px;font-size:8.4px;color:#1f1f1f;left:300.80px;transform:scaleX(0.9016)">OfficeSetup.exe</div>
<div class="t g" style="top:377.00px;font-size:7.1px;color:#1f1f1f;right:201.00px;transform-origin:100% 0;transform:scaleX(0.9008)">7.21 MB</div>
<div class="t g" style="top:377.00px;font-size:7.1px;color:#1f1f1f;left:507.80px;transform:scaleX(0.7968)">File EXE</div>
<div class="t g" style="top:377.00px;font-size:7.1px;color:#1f1f1f;left:549.20px;transform:scaleX(0.9291)">3/18/2025 7:35 PM</div>
<div class="t h" style="top:388.00px;font-size:8.4px;color:#1f1f1f;left:300.80px;transform:scaleX(0.9321)">scott.txt</div>
<div class="t g" style="top:389.00px;font-size:7.1px;color:#1f1f1f;right:201.00px;transform-origin:100% 0;transform:scaleX(0.8565)">86 B</div>
<div class="t g" style="top:389.00px;font-size:7.1px;color:#1f1f1f;left:507.80px;transform:scaleX(0.8248)">File TXT</div>
<div class="t g" style="top:389.00px;font-size:7.1px;color:#1f1f1f;left:549.20px;transform:scaleX(0.9352)">2/26/2025 3:46 AM</div>
<div class="t h" style="top:400.00px;font-size:8.4px;color:#1f1f1f;left:300.80px;width:163.80px;overflow:hidden"><span style="display:inline-block;transform-origin:0 0;transform:scaleX(0.8416)">SW_DVD5_Visio_Pro_2019_32_BIT_X64_English_C</span></div>
<div class="t g" style="top:401.00px;font-size:7.1px;color:#1f1f1f;right:201.00px;transform-origin:100% 0;transform:scaleX(0.9028)">3.31 GB</div>
<div class="t g" style="top:401.00px;font-size:7.1px;color:#1f1f1f;left:507.80px;transform:scaleX(0.8117)">File ISO</div>
<div class="t g" style="top:401.00px;font-size:7.1px;color:#1f1f1f;left:549.20px;transform:scaleX(0.9326)">1/27/2025 10:47 PM</div>
<div class="t h" style="top:411.00px;font-size:8.4px;color:#1f1f1f;left:300.80px;transform:scaleX(0.9036)">test.docx</div>
<div class="t g" style="top:412.00px;font-size:7.1px;color:#1f1f1f;right:201.00px;transform-origin:100% 0;transform:scaleX(0.8650)">11.42 KB</div>
<div class="t g" style="top:412.00px;font-size:7.1px;color:#1f1f1f;left:507.80px;transform:scaleX(0.8700)">File DOCX</div>
<div class="t g" style="top:412.00px;font-size:7.1px;color:#1f1f1f;left:549.20px;transform:scaleX(0.9291)">2/17/2025 5:06 PM</div>
<div class="t h" style="top:423.00px;font-size:8.4px;color:#1f1f1f;left:300.80px;transform:scaleX(0.9139)">test1.docx</div>
<div class="t g" style="top:424.00px;font-size:7.1px;color:#1f1f1f;right:201.00px;transform-origin:100% 0;transform:scaleX(0.8565)">10.24 KB</div>
<div class="t g" style="top:424.00px;font-size:7.1px;color:#1f1f1f;left:507.80px;transform:scaleX(0.8700)">File DOCX</div>
<div class="t g" style="top:424.00px;font-size:7.1px;color:#1f1f1f;left:549.20px;transform:scaleX(0.9326)">1/27/2025 10:43 PM</div>
</body></html>
